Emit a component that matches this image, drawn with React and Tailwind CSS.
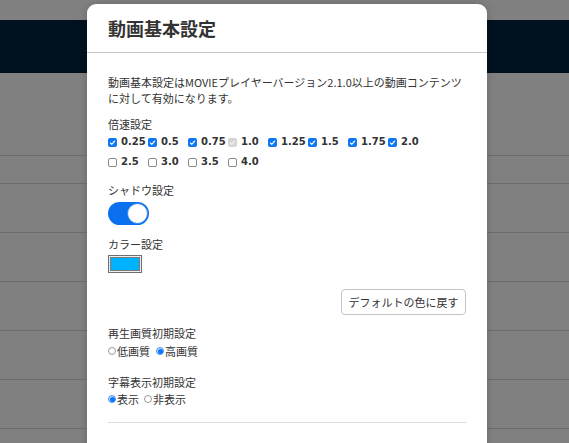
import React from "react";

const jp = { fontFamily: '"Noto Sans CJK JP", "Noto Sans", sans-serif' };
const num = { fontFamily: '"DejaVu Sans", "Noto Sans CJK JP", sans-serif' };

function Check({ checked, disabled }) {
  if (checked) {
    return (
      <span
        className={`flex h-[9px] w-[9px] items-center justify-center rounded-[2px] ${
          disabled ? "bg-[#d4d4d4]" : "bg-[#0b75f5]"
        }`}
      >
        <svg width="7" height="7" viewBox="0 0 10 10">
          <path d="M1.5 5.2 L4 7.6 L8.6 2.2" stroke={disabled ? "#f4f4f4" : "#fff"} strokeWidth="1.8" fill="none" />
        </svg>
      </span>
    );
  }
  return <span className="h-[9px] w-[9px] rounded-[2px] border border-[#8a8a8a] bg-white" />;
}

function Radio({ checked }) {
  if (checked) {
    return (
      <span className="flex h-[8px] w-[8px] items-center justify-center rounded-full border border-[#3d8ff5] bg-[#cfe3fd]">
        <span className="h-[5px] w-[5px] rounded-full bg-[#0b75f5]" />
      </span>
    );
  }
  return <span className="h-[8px] w-[8px] rounded-full border border-[#9a9a9a] bg-white" />;
}

const speeds = [
  ["0.25", true],
  ["0.5", true],
  ["0.75", true],
  ["1.0", true, true],
  ["1.25", true],
  ["1.5", true],
  ["1.75", true],
  ["2.0", true],
  ["2.5", false],
  ["3.0", false],
  ["3.5", false],
  ["4.0", false],
];

export default function App() {
  return (
    <div className="relative h-[443px] w-[569px] overflow-hidden bg-[#808080]" style={jp}>
      {/* background page (dimmed) */}
      <div className="h-[20px] bg-[#808080]" />
      <div className="h-[53px] bg-[#01111f]" />
      <div className="h-[82px]" />
      <div className="border-t border-[#6c6c6c] h-[28px]" />
      <div className="border-t border-[#6c6c6c] h-[49px]" />
      <div className="border-t border-[#6c6c6c] h-[49px]" />
      <div className="border-t border-[#6c6c6c] h-[49px]" />
      <div className="border-t border-[#6c6c6c] h-[49px]" />
      <div className="border-t border-[#6c6c6c] h-[49px]" />
      <div className="border-t border-[#6c6c6c] h-[49px]" />

      {/* modal */}
      <div className="absolute left-[87px] top-[4px] w-[400px] rounded-[9px] bg-white text-[#333] shadow-[0_0_8px_rgba(0,0,0,0.18)]">
        <div className="flex h-[49px] items-center border-b border-[#c8c8c8] px-[21px]">
          <h1 className="text-[18px] font-bold leading-none text-[#333]">動画基本設定</h1>
        </div>
        <div className="px-[21px] pt-[21px] pb-[40px] text-[11px]">
          <p className="leading-[16px] whitespace-nowrap">
            動画基本設定はMOVIEプレイヤーバージョン2.1.0以上の動画コンテンツ
            <br />
            に対して有効になります。
          </p>

          <div className="mt-[10px] leading-[16px]">倍速設定</div>
          <div className="flex flex-wrap">
            {speeds.map(([label, checked, disabled]) => (
              <div key={label} className="flex h-[20px] w-[40px] items-center">
                <Check checked={checked} disabled={disabled} />
                <span className="ml-[4px] text-[10px] font-bold leading-none text-[#333]" style={num}>
                  {label}
                </span>
              </div>
            ))}
          </div>

          <div className="mt-[10px] leading-[16px]">シャドウ設定</div>
          <div className="mt-[4px] flex h-[23px] w-[41px] items-center justify-end rounded-full bg-[#0b70f0] px-[1px]">
            <span className="h-[21px] w-[21px] rounded-full border border-[#2f84f2] bg-white" />
          </div>

          <div className="mt-[11px] leading-[16px]">カラー設定</div>
          <div className="mt-[3px] flex h-[18px] w-[34px] items-center justify-center border border-[#6f6f6f] bg-[#efefef]">
            <span className="h-[14px] w-[30px] border border-[#7a7a7a] bg-[#00b2ff]" />
          </div>

          <div className="mt-[16px] flex justify-end">
            <button className="h-[26px] w-[125px] rounded-[4px] border border-[#c4c4c4] bg-white text-[11px] leading-none text-[#333]">
              デフォルトの色に戻す
            </button>
          </div>

          <div className="mt-[10px] leading-[16px]">再生画質初期設定</div>
          <div className="mt-[1px] flex h-[18px] items-center">
            <span className="mr-[6px] flex items-center">
              <Radio />
              <span className="ml-[1px]">低画質</span>
            </span>
            <span className="flex items-center">
              <Radio checked />
              <span className="ml-[1px]">高画質</span>
            </span>
          </div>

          <div className="mt-[14px] leading-[16px]">字幕表示初期設定</div>
          <div className="flex h-[18px] items-center">
            <span className="mr-[5px] flex items-center">
              <Radio checked />
              <span className="ml-[1px]">表示</span>
            </span>
            <span className="flex items-center">
              <Radio />
              <span className="ml-[1px]">非表示</span>
            </span>
          </div>

          <div className="mt-[14px] border-t border-[#dcdcdc]" />
        </div>
      </div>
    </div>
  );
}
